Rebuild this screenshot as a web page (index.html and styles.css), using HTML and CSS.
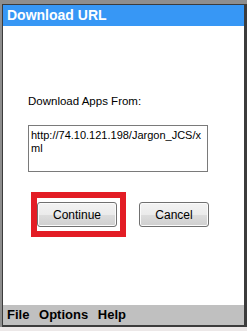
FILE: index.html
```html
<!DOCTYPE html>
<html lang="en">
<head>
    <meta charset="UTF-8">
    <meta name="viewport" content="width=device-width, initial-scale=1.0">
    <title>Download URL</title>
    <link rel="stylesheet" href="styles.css">
</head>
<body>

    <div class="frame">
        <div class="window">
            <div class="titlebar">Download URL</div>

            <div class="content">
                <p class="label">Download Apps From:</p>
                <div class="url-box">http://74.10.121.198/Jargon_JCS/xml</div>

                <div class="buttons">
                    <div class="highlight">
                        <button class="btn">Continue</button>
                    </div>
                    <button class="btn">Cancel</button>
                </div>
            </div>

            <div class="menubar">
                <span>File</span>
                <span>Options</span>
                <span>Help</span>
            </div>
        </div>
    </div>

</body>
</html>
```

FILE: styles.css
```css
body {
    margin: 0;
    background-color: #ece8e8;
    font-family: "Liberation Sans", Arial, sans-serif;
}
.frame {
    width: 247px;
    height: 327px;
    box-sizing: border-box;
    padding: 4px 0 0 2px;
    background-color: #8e8e8e;
}
.window {
    height: 100%;
    box-sizing: border-box;
    border: 1px solid #3c3c3c;
    border-right-width: 3px;
    border-bottom-width: 2px;
    display: flex;
    flex-direction: column;
    background-color: #fff;
}
.titlebar {
    height: 21px;
    background-color: #3797f5;
    color: #fff;
    font-weight: bold;
    font-size: 14px;
    line-height: 21px;
    padding-left: 4px;
}
.content {
    flex: 1;
    padding: 68px 0 0 25px;
}
.label {
    margin: 0;
    font-size: 11.5px;
    line-height: 14px;
    color: #000;
}
.url-box {
    margin-top: 17px;
    width: 180px;
    height: 47px;
    box-sizing: border-box;
    border: 1px solid #7a7a7a;
    padding: 3px 2px;
    font-size: 11px;
    line-height: 13px;
    word-break: break-all;
}
.buttons {
    margin-top: 20px;
    margin-left: 3px;
    display: flex;
    align-items: center;
    gap: 13px;
}
.highlight {
    border: 6px solid #e31d25;
    padding: 4px 3px 4px 0;
}
.btn {
    display: block;
    width: 80px;
    height: 25px;
    border: 1px solid #707070;
    border-radius: 3px;
    background: linear-gradient(#f3f3f3 0%, #ebebeb 50%, #dddddd 51%, #cfcfcf 100%);
    box-shadow: inset 0 0 0 1px #fbfbfb;
    font-family: "Liberation Sans", Arial, sans-serif;
    font-size: 12px;
    color: #000;
    padding: 0;
}
.buttons > .btn {
    width: 70px;
}
.menubar {
    height: 20px;
    background-color: #c0c0c0;
    font-weight: bold;
    font-size: 13px;
    line-height: 20px;
    padding-left: 4px;
}
.menubar span {
    margin-right: 6px;
}
```
